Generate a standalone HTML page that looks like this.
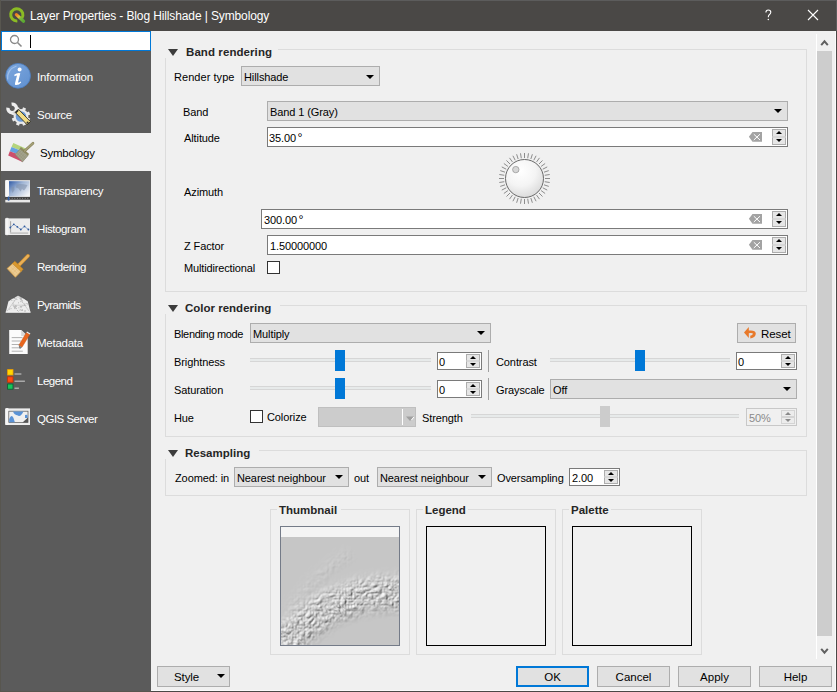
<!DOCTYPE html>
<html><head><meta charset="utf-8">
<style>
*{box-sizing:border-box}
html,body{margin:0;padding:0}
body{width:837px;height:692px;position:relative;overflow:hidden;background:#f0f0f0;font-family:"Liberation Sans",sans-serif;font-size:11px;color:#000}
div,span{position:absolute}
.t{white-space:nowrap;line-height:14px;font-size:11px;letter-spacing:-0.1px}
.b{font-weight:bold;font-size:11.5px;color:#262626;letter-spacing:0}
.combo{background:#e1e1e1;border:1px solid #adadad}
.arr{width:8px;height:4px;background:#000;clip-path:polygon(0 0,100% 0,50% 100%)}
.spin{background:#fff;border:1px solid #7a7a7a}
.grp{border:1px solid #dcdcdc}
.btn{background:#e1e1e1;border:1px solid #adadad;text-align:center;line-height:21px;font-size:11.5px}
.tri{width:0;height:0;border-left:5.5px solid transparent;border-right:5.5px solid transparent;border-top:7px solid #3c3c3c}
.side .t{color:#fff;font-size:11.5px;letter-spacing:-0.25px}
.sb{border:1px solid #adadad;background:#e8e8e8}
.groove{height:4px;background:#e7eaea;border-top:1px solid #d6d6d6;border-bottom:1px solid #d6d6d6}
.handle{width:10px;height:21px;background:#0078d7}
.sp2{width:14px;height:16px}
.sp2:before{content:"";position:absolute;left:0;top:0;width:14px;height:8px;box-sizing:border-box;border:1px solid #adadad;border-bottom-color:#d8d8d8;background:#e6e6e6}
.sp2:after{content:"";position:absolute;left:0;top:8px;width:14px;height:8px;box-sizing:border-box;border:1px solid #adadad;border-top-color:#d8d8d8;background:#e6e6e6}
.sp2 b,.sp3 b{position:absolute;left:4px;width:0;height:0;border-left:3px solid transparent;border-right:3px solid transparent;z-index:2}
.sp2 b.u{top:2px;border-bottom:3px solid #000}.sp2 b.d{top:10px;border-top:3px solid #000}
.sp3{width:14px;height:14px}
.sp3:before{content:"";position:absolute;left:0;top:0;width:14px;height:7px;box-sizing:border-box;border:1px solid #adadad;border-bottom-color:#d8d8d8;background:#e6e6e6}
.sp3:after{content:"";position:absolute;left:0;top:7px;width:14px;height:7px;box-sizing:border-box;border:1px solid #adadad;border-top-color:#d8d8d8;background:#e6e6e6}
.sp3 b.u{top:2px;border-bottom:3px solid #000}.sp3 b.d{top:9px;border-top:3px solid #000}
.dis{border-color:#d0d0d0}
.dis:before,.dis:after{border-color:#d4d4d4;background:#ececec}.dis b.u{border-bottom-color:#8a8a8a}.dis b.d{border-top-color:#8a8a8a}
</style></head><body>
<!-- window frame -->
<div style="left:0;top:0;width:837px;height:31px;background:#4a4846"></div>
<div style="left:835px;top:31px;width:1px;height:660px;background:#fafafa"></div><div style="left:0;top:690px;width:836px;height:1px;background:#fafafa"></div><div style="left:836px;top:0;width:1px;height:31px;background:#5c5c5c"></div><div style="left:836px;top:31px;width:1px;height:661px;background:#4a4846"></div>
<div style="left:151px;top:691px;width:686px;height:1px;background:#4a4846"></div><div style="left:0;top:0;width:837px;height:1px;background:#5c5c5c"></div>
<!-- title -->
<svg style="position:absolute;left:6px;top:4px" width="24" height="24" viewBox="0 0 24 24">
<defs><linearGradient id="pg" x1="0" y1="0" x2="1" y2="1"><stop offset="0" stop-color="#f0801e"/><stop offset="0.35" stop-color="#e0c040"/><stop offset="0.55" stop-color="#7cbc3a"/><stop offset="1" stop-color="#5aa832"/></linearGradient></defs>
<path d="M15.80 14.30 A6.1 6.1 0 1 0 11.33 16.88" fill="none" stroke="#8bbb24" stroke-width="3"/>
<path d="M10.4 10.6 L17.6 17.2" stroke="url(#pg)" stroke-width="3.2" stroke-linecap="round"/>
</svg>
<div class="t" style="left:30px;top:9px;font-size:12px;color:#fff;letter-spacing:-0.12px">Layer Properties - Blog Hillshade | Symbology</div>
<svg style="position:absolute;left:764px;top:9px" width="9" height="13" viewBox="0 0 9 13"><path d="M1.9 3.4 Q1.9 1 4.3 1 Q6.8 1 6.8 3.3 Q6.8 4.8 5.3 5.7 Q4.3 6.4 4.3 8.2" fill="none" stroke="#fff" stroke-width="1.1"/><circle cx="4.3" cy="10.6" r="0.75" fill="#fff"/></svg>
<svg style="position:absolute;left:807px;top:9px" width="12" height="12" viewBox="0 0 12 12"><path d="M1 1L11 11M11 1L1 11" stroke="#fff" stroke-width="1.1"/></svg>

<!-- sidebar -->
<div class="side" style="left:0;top:31px;width:151px;height:661px;background:#5b5b5b">
</div>
<div style="left:1px;top:31px;width:150px;height:20px;background:#fff;border:1px solid #0078d7"></div>
<svg style="position:absolute;left:9px;top:34px" width="14" height="14" viewBox="0 0 14 14"><circle cx="5.5" cy="5.5" r="4" fill="none" stroke="#8a8a8a" stroke-width="1.3"/><path d="M8.5 8.5L12.5 12.5" stroke="#8a8a8a" stroke-width="1.6"/></svg>
<div style="left:30px;top:35px;width:1px;height:13px;background:#000"></div>

<div style="left:1px;top:133px;width:151px;height:38px;background:#f0f0f0"></div>
<svg style="position:absolute;left:0;top:0" width="151" height="440" viewBox="0 0 151 440">
<defs>
<linearGradient id="ig" x1="0" y1="0" x2="1" y2="1"><stop offset="0" stop-color="#7ea8de"/><stop offset="1" stop-color="#5f90d0"/></linearGradient>
<linearGradient id="tg" x1="0" y1="0" x2="1" y2="0.8"><stop offset="0" stop-color="#2f5aa6"/><stop offset="0.45" stop-color="#9fb4d4"/><stop offset="1" stop-color="#f2f4f7"/></linearGradient>
</defs>
<!-- Information -->
<circle cx="18.1" cy="75.8" r="12.4" fill="url(#ig)" stroke="#4b7ec2" stroke-width="0.8"/><path d="M7.6 79.5 Q6.8 69.5 16.5 66" fill="none" stroke="#a8c6ee" stroke-width="1.3" opacity="0.8"/>
<circle cx="19.6" cy="69.4" r="2" fill="#fff"/>
<path d="M14.2 74.8 Q17 72.6 20.3 73.2 L18 82.4 Q19.4 82.6 20.8 81.4 L21.2 82.4 Q18.6 85.4 15.6 85 Q14.6 84.6 15 83.2 L17 75.6 Q15.6 75.8 14.6 76.2Z" fill="#fff"/>
<!-- Source -->
<circle cx="21" cy="116.5" r="7.4" fill="#e9e9e9"/><rect x="19.40" y="107.20" width="3.2" height="4" fill="#e9e9e9" transform="rotate(22.5 21 116.5)"/><rect x="19.40" y="107.20" width="3.2" height="4" fill="#e9e9e9" transform="rotate(67.5 21 116.5)"/><rect x="19.40" y="107.20" width="3.2" height="4" fill="#e9e9e9" transform="rotate(112.5 21 116.5)"/><rect x="19.40" y="107.20" width="3.2" height="4" fill="#e9e9e9" transform="rotate(157.5 21 116.5)"/><rect x="19.40" y="107.20" width="3.2" height="4" fill="#e9e9e9" transform="rotate(202.5 21 116.5)"/><rect x="19.40" y="107.20" width="3.2" height="4" fill="#e9e9e9" transform="rotate(247.5 21 116.5)"/><rect x="19.40" y="107.20" width="3.2" height="4" fill="#e9e9e9" transform="rotate(292.5 21 116.5)"/><rect x="19.40" y="107.20" width="3.2" height="4" fill="#e9e9e9" transform="rotate(337.5 21 116.5)"/>
<circle cx="21" cy="116.5" r="5.3" fill="#6c9bd6"/>
<path d="M11.60 104.14 A4.3 4.3 0 1 1 7.94 107.80" fill="none" stroke="#eeeeee" stroke-width="3.4"/>
<path d="M13.5 111.5 L16.5 114" stroke="#dadada" stroke-width="3.4"/>
<path d="M15.2 112.4 L18.4 109.2 L30.4 121.6 L27.2 124.8Z" fill="#f2dc84" stroke="#2e2e24" stroke-width="0.9"/>
<path d="M15.6 112.8 L18.2 110.2" stroke="#222" stroke-width="1.6"/>
<circle cx="27.6" cy="122.6" r="1.1" fill="#333"/>
<!-- Symbology (selected) -->
<path d="M13.3 142.9 L25.8 148.5 L24.2 152 L11.5 147Z" fill="#b4d47c"/>
<path d="M11.5 147 L24.2 152 L22.6 156 L9.8 151.2Z" fill="#62a2e2"/>
<path d="M9.8 151.2 L22.6 156 L22.5 161.9 L8.2 155.4Z" fill="#cd4f6c"/>
<path d="M15.1 154.5 L20.2 149 L28.1 155.4 L22.5 161.9Z" fill="#a3a38c" stroke="#807e64" stroke-width="0.6"/>
<path d="M16.6 156 L21.6 150.4 M18.2 157.4 L23.4 151.8 M19.8 158.8 L25 153.2 M21.4 160.2 L26.6 154.6 M17 153 L24 159.6 M18.6 151.4 L25.6 158" stroke="#8a8a70" stroke-width="0.45" opacity="0.8"/>
<path d="M19.6 148.4 L21 147 L29.2 154 L27.8 155.6Z" fill="#8e8a62"/>
<path d="M24.6 151 L33 143.2" stroke="#847e58" stroke-width="2.6" stroke-linecap="round"/><path d="M24.6 151 L33 143.2" stroke="#a6a278" stroke-width="1.6" stroke-linecap="round"/>
<!-- Transparency -->
<rect x="5.3" y="180.2" width="24.7" height="16.6" fill="#f0f0f0"/>
<rect x="5.3" y="180" width="3.6" height="17" rx="1.5" fill="#f8f8f8"/>
<rect x="9" y="181.2" width="20.6" height="15.2" fill="url(#tg)"/>
<path d="M16.5 184.5 L20 184 L23.5 184.3 L27.5 185 L26 188 L24 190.5 L22 189 L20.5 191.5 L18.5 188.5 L16 187.5Z M11.5 187 L14 186.5 L14.5 190 L12.5 193 L11.5 190Z" fill="#7d8ea8" opacity="0.55"/>
<rect x="5.3" y="197.3" width="24.7" height="2.2" fill="#3c3c3c"/>
<path d="M6.5 198.4 H29.5" stroke="#8a8a8a" stroke-width="1" stroke-dasharray="1 1.6"/>
<rect x="5.3" y="199.8" width="24.7" height="2.6" fill="#e8e8e8"/>
<rect x="7.8" y="196.6" width="1.6" height="4" fill="#2a5aa8"/>
<!-- Histogram -->
<rect x="5.3" y="218.4" width="24.7" height="16.6" fill="#ececec"/>
<rect x="5.3" y="218" width="3.6" height="17" rx="1.5" fill="#f6f6f6" stroke="#dcdcdc" stroke-width="0.4"/>
<rect x="10.2" y="221.2" width="0.9" height="11.4" fill="#9a9a9a"/>
<rect x="10.2" y="232.4" width="18" height="1.4" fill="#bdbdbd"/>
<path d="M10.3 227.5 L13.8 224.3 L17.3 226.8 L20.8 229.5 L24.5 226.4 L28.4 229.5" fill="none" stroke="#5c7fb8" stroke-width="0.7"/>
<g fill="#2f5a9e"><circle cx="10.3" cy="227.5" r="0.9"/><circle cx="13.8" cy="224.3" r="0.9"/><circle cx="17.3" cy="226.8" r="0.9"/><circle cx="20.8" cy="229.5" r="0.9"/><circle cx="24.5" cy="226.4" r="0.9"/><circle cx="28.4" cy="229.5" r="0.9"/></g>
<!-- Rendering -->
<path d="M18.6 265.4 L28 255.8" stroke="#c98a2e" stroke-width="3.6" stroke-linecap="round"/>
<path d="M18.6 265.4 L28 255.8" stroke="#e9b058" stroke-width="2.4" stroke-linecap="round"/>
<path d="M7.1 268.5 L13.1 263.2 L21.6 270.8 L15.4 277.3Z" fill="#eccb92" stroke="#d39a40" stroke-width="0.8"/>
<path d="M8.8 268.6 L15.4 275.2 M10.6 267 L17.4 273.4 M12.4 265.4 L19.4 271.8 M11 270.6 L16.6 265.4 M13.2 272.6 L18.8 267.2" stroke="#dcae66" stroke-width="0.5" opacity="0.7"/>
<path d="M12.4 263.6 L14.8 261.2 L23.2 269.2 L21 271.4Z" fill="#d9982f" stroke="#c0821f" stroke-width="0.6"/>
<!-- Pyramids -->
<path d="M5.7 312.5 L8.5 301 L12 298.6 L14 297.8 L18 295.2 L22 297.6 L24 298.4 L27.7 301 L30.5 312.5Z" fill="#ececec"/>
<path d="M8.5 301 L12 298.6 L14 297.8 L18 295.2 L22 297.6 L24 298.4 L27.7 301" fill="none" stroke="#303030" stroke-width="0.9" opacity="0.55"/>
<path d="M6.8 311.5 L18 296.2 L29.4 311.5 M12.2 305.2 L23.8 305.2" fill="none" stroke="#b8b8b8" stroke-width="0.6"/>
<rect x="13.3" y="304.6" width="0.9" height="0.9" fill="#b0b0b0"/><rect x="15.7" y="305.5" width="0.9" height="0.9" fill="#b0b0b0"/><rect x="20.3" y="297.9" width="0.9" height="0.9" fill="#b0b0b0"/><rect x="9.2" y="308.7" width="0.9" height="0.9" fill="#b0b0b0"/><rect x="13.7" y="300.3" width="0.9" height="0.9" fill="#b0b0b0"/><rect x="26.9" y="303.6" width="0.9" height="0.9" fill="#b0b0b0"/><rect x="24.1" y="303.7" width="0.9" height="0.9" fill="#b0b0b0"/><rect x="20.5" y="299.1" width="0.9" height="0.9" fill="#b0b0b0"/><rect x="20.4" y="309.2" width="0.9" height="0.9" fill="#b0b0b0"/><rect x="18.4" y="307.4" width="0.9" height="0.9" fill="#b0b0b0"/><rect x="21.1" y="297.9" width="0.9" height="0.9" fill="#b0b0b0"/><rect x="22.6" y="305.3" width="0.9" height="0.9" fill="#b0b0b0"/><rect x="24.6" y="303.6" width="0.9" height="0.9" fill="#b0b0b0"/><rect x="21.9" y="309.3" width="0.9" height="0.9" fill="#b0b0b0"/><rect x="21.9" y="309.9" width="0.9" height="0.9" fill="#b0b0b0"/><rect x="16.1" y="308.2" width="0.9" height="0.9" fill="#b0b0b0"/><rect x="17.0" y="310.1" width="0.9" height="0.9" fill="#b0b0b0"/><rect x="11.4" y="300.0" width="0.9" height="0.9" fill="#b0b0b0"/><rect x="26.4" y="303.1" width="0.9" height="0.9" fill="#b0b0b0"/><rect x="20.3" y="301.2" width="0.9" height="0.9" fill="#b0b0b0"/><rect x="18.1" y="302.4" width="0.9" height="0.9" fill="#b0b0b0"/><rect x="15.3" y="305.2" width="0.9" height="0.9" fill="#b0b0b0"/><rect x="19.5" y="309.7" width="0.9" height="0.9" fill="#b0b0b0"/><rect x="21.3" y="310.0" width="0.9" height="0.9" fill="#b0b0b0"/><rect x="24.4" y="310.9" width="0.9" height="0.9" fill="#b0b0b0"/><rect x="21.1" y="299.3" width="0.9" height="0.9" fill="#b0b0b0"/><rect x="24.5" y="310.5" width="0.9" height="0.9" fill="#b0b0b0"/><rect x="25.3" y="305.0" width="0.9" height="0.9" fill="#b0b0b0"/><rect x="21.8" y="300.0" width="0.9" height="0.9" fill="#b0b0b0"/><rect x="24.0" y="305.0" width="0.9" height="0.9" fill="#b0b0b0"/><rect x="14.1" y="297.9" width="0.9" height="0.9" fill="#b0b0b0"/><rect x="24.4" y="310.9" width="0.9" height="0.9" fill="#b0b0b0"/><rect x="10.6" y="308.2" width="0.9" height="0.9" fill="#b0b0b0"/><rect x="16.4" y="299.1" width="0.9" height="0.9" fill="#b0b0b0"/><rect x="14.3" y="307.8" width="0.9" height="0.9" fill="#b0b0b0"/><rect x="20.1" y="297.6" width="0.9" height="0.9" fill="#b0b0b0"/><rect x="21.9" y="301.6" width="0.9" height="0.9" fill="#b0b0b0"/><rect x="24.9" y="310.7" width="0.9" height="0.9" fill="#b0b0b0"/><rect x="18.1" y="311.0" width="0.9" height="0.9" fill="#b0b0b0"/><rect x="14.6" y="298.1" width="0.9" height="0.9" fill="#b0b0b0"/><rect x="19.8" y="297.4" width="0.9" height="0.9" fill="#b0b0b0"/><rect x="12.6" y="302.7" width="0.9" height="0.9" fill="#b0b0b0"/>
<path d="M13 306 L15 309.5 L17 306Z M19.5 306 L21 308.5 L22.5 306Z" fill="#bdbdbd"/>
<rect x="5.7" y="311.6" width="24.8" height="1" fill="#f6f6f6"/>
<!-- Metadata -->
<path d="M9.2 330 L21.2 330 L27.7 336 L27.7 354 L9.2 354Z" fill="#fbfbfb"/>
<path d="M21.2 330 L21.2 336 L27.7 336Z" fill="#d8d8d8"/>
<path d="M11.7 337.6H22.5M11.7 341H21M11.7 344.5H20.2M11.7 347.8H21M11.7 351.2H22.8" stroke="#a8a8a8" stroke-width="0.9"/>
<path d="M26.4 332.6 L29.8 334.6 L22 347.2 L18.8 345.2Z" fill="#e8661e" stroke="#c04c10" stroke-width="0.4"/>
<path d="M18.8 345.2 L22 347.2 L20.2 348.8 L19.2 348.2Z" fill="#7a7a7a"/>
<path d="M26.4 332.6 L29.8 334.6 L30.4 333.4 L27 331.4Z" fill="#f0f0f0"/>
<!-- Legend -->
<rect x="7.6" y="369.6" width="5.4" height="5.4" fill="#ffd600" stroke="#f0a000" stroke-width="0.8"/>
<rect x="7.6" y="376.8" width="5.4" height="5.4" fill="#ff4a10" stroke="#c83000" stroke-width="0.8"/>
<rect x="7.6" y="384" width="5.4" height="5.2" fill="#16c45a" stroke="#0a5a30" stroke-width="0.8"/>
<path d="M14.5 374H21.4M14.5 381.2H24.9M14.5 388.2H18.9" stroke="#a9a9a9" stroke-width="1.6"/>
<!-- QGIS Server -->
<rect x="5.3" y="408.4" width="24.7" height="16.6" fill="#ececec"/>
<rect x="5.3" y="408" width="3.6" height="17" rx="1.5" fill="#f6f6f6"/>
<rect x="8.8" y="411.2" width="19.2" height="11.4" fill="#f0f0f0" stroke="#555" stroke-width="0.7"/>
<path d="M13 411.5 Q14 415 18 415.5 Q20 417 22 414 L23.5 411.5Z" fill="#5b93d6"/>
<path d="M9.2 422.3 L9.2 419 Q11.5 413.5 13.5 418 L14.8 422.3Z" fill="#5b93d6"/>
<path d="M25 415 Q27.5 414 27.6 416 L27.6 418 L25 418Z" fill="#5b93d6"/>
<path d="M22.5 422.6 L28 417.6 L28 422.6Z" fill="#555"/>
</svg>


<div class="side">
<div class="t" style="left:37px;top:70px;letter-spacing:-0.13px">Information</div>
<div class="t" style="left:37px;top:108px">Source</div>
<div class="t" style="left:40px;top:146px;color:#000">Symbology</div>
<div class="t" style="left:37px;top:184px;letter-spacing:-0.3px">Transparency</div>
<div class="t" style="left:37px;top:222px;letter-spacing:-0.42px">Histogram</div>
<div class="t" style="left:37px;top:260px;letter-spacing:-0.45px">Rendering</div>
<div class="t" style="left:37px;top:298px;letter-spacing:-0.55px">Pyramids</div>
<div class="t" style="left:37px;top:336px">Metadata</div>
<div class="t" style="left:37px;top:374px;letter-spacing:-0.5px">Legend</div>
<div class="t" style="left:37px;top:412px;letter-spacing:-0.5px">QGIS Server</div>
</div>

<div style="left:0;top:0;width:1px;height:692px;background:#58564f"></div><div style="left:0;top:691px;width:151px;height:1px;background:#58564f"></div>
<!-- scrollbar -->
<div style="left:816px;top:34px;width:1px;height:625px;background:#fff"></div>
<div style="left:817px;top:51px;width:15px;height:585px;background:#cdcdcd"></div>
<svg style="position:absolute;left:820px;top:39px" width="10" height="8" viewBox="0 0 10 8"><path d="M1.2 6.2L4.5 2.4L7.8 6.2" fill="none" stroke="#606060" stroke-width="2"/></svg>
<svg style="position:absolute;left:820px;top:647px" width="10" height="8" viewBox="0 0 10 8"><path d="M1.2 1.8L4.5 5.6L7.8 1.8" fill="none" stroke="#606060" stroke-width="2"/></svg>

<!-- ===== Band rendering ===== -->
<div class="grp" style="left:165px;top:49px;width:642px;height:243px"></div>
<div style="left:164px;top:42px;width:114px;height:16px;background:#f0f0f0"></div>
<div class="tri" style="left:168px;top:49px"></div>
<div class="t b" style="left:186px;top:45px;letter-spacing:0.08px">Band rendering</div>
<div class="t" style="left:174px;top:70px;letter-spacing:0.05px">Render type</div>
<div class="combo" style="left:241px;top:66px;width:139px;height:20px"><div class="arr" style="right:5px;top:8px"></div></div>
<div class="t" style="left:244px;top:70px">Hillshade</div>

<div class="t" style="left:183px;top:105px">Band</div>
<div class="combo" style="left:267px;top:101px;width:521px;height:20px"><div class="arr" style="right:5px;top:7px"></div></div>
<div class="t" style="left:270px;top:105px">Band 1 (Gray)</div>

<div class="t" style="left:184px;top:131px">Altitude</div>
<div class="spin" style="left:267px;top:127px;width:521px;height:20px"></div>
<div class="t" style="left:269px;top:131px">35.00<span style="position:relative;top:1px;margin-left:1.5px;font-size:12.5px;vertical-align:top;line-height:13px">°</span></div>

<div class="t" style="left:184px;top:185px">Azimuth</div>
<div class="spin" style="left:261px;top:209px;width:527px;height:20px"></div>
<div class="t" style="left:264px;top:213px">300.00<span style="position:relative;top:1px;margin-left:1.5px;font-size:12.5px;vertical-align:top;line-height:13px">°</span></div>

<div class="t" style="left:184px;top:239px">Z Factor</div>
<div class="spin" style="left:267px;top:235px;width:521px;height:20px"></div>
<div class="t" style="left:270px;top:239px">1.50000000</div>

<div class="t" style="left:184px;top:261px;letter-spacing:-0.15px">Multidirectional</div>
<div style="left:267px;top:261px;width:13px;height:13px;background:#fff;border:1px solid #333"></div>

<!-- ===== Color rendering ===== -->
<div class="grp" style="left:165px;top:305px;width:642px;height:132px"></div>
<div style="left:164px;top:298px;width:116px;height:16px;background:#f0f0f0"></div>
<div class="tri" style="left:168px;top:305px"></div>
<div class="t b" style="left:185px;top:301px">Color rendering</div>
<div class="t" style="left:174px;top:327px;letter-spacing:-0.33px">Blending mode</div>
<div class="combo" style="left:250px;top:323px;width:241px;height:20px"><div class="arr" style="right:5px;top:7px"></div></div>
<div class="t" style="left:253px;top:327px">Multiply</div>
<div class="btn" style="left:737px;top:323px;width:59px;height:20px"></div>
<div class="t" style="left:761px;top:327px;font-size:11.5px">Reset</div>
<svg style="position:absolute;left:738px;top:322px" width="24" height="22" viewBox="0 0 24 22"><path d="M6 10.6 L10.8 5 L10.8 16Z" fill="#e8792a"/><path d="M10 8.6 Q17.6 7.6 17.8 11.6 Q17.8 15.6 12.4 16.6 L12.2 13.8 Q14.8 13.2 14.9 11.8 Q15 10.6 10 11.2Z" fill="#e8792a"/></svg>

<div class="t" style="left:174px;top:355px">Brightness</div>
<div class="t" style="left:174px;top:383px">Saturation</div>
<div class="t" style="left:174px;top:411px">Hue</div>
<div class="t" style="left:496px;top:355px">Contrast</div>
<div class="t" style="left:496px;top:383px">Grayscale</div>
<div class="combo" style="left:550px;top:379px;width:247px;height:20px"><div class="arr" style="right:5px;top:7px"></div></div>
<div class="t" style="left:553px;top:383px">Off</div>

<div style="left:250px;top:410px;width:13px;height:13px;background:#fff;border:1px solid #333"></div>
<div class="t" style="left:267px;top:410px">Colorize</div>
<div style="left:318px;top:407px;width:98px;height:20px;background:#cccccc;border:1px solid #bfbfbf"></div>
<div style="left:402px;top:409px;width:1px;height:16px;background:#fff"></div>
<svg style="position:absolute;left:405px;top:415px" width="10" height="7" viewBox="0 0 10 7"><path d="M1 1.5H9L5 6Z" fill="#a0a0a0"/><path d="M6.5 5L8.8 2" stroke="#fff" stroke-width="1"/></svg>
<div class="t" style="left:422px;top:411px">Strength</div>


<!-- spin buttons & clear icons for band spinboxes -->
<div style="left:772px;top:129px;width:14px;height:16px" class="sp2"><b class="u"></b><b class="d"></b></div>
<div style="left:772px;top:211px;width:14px;height:16px" class="sp2"><b class="u"></b><b class="d"></b></div>
<div style="left:772px;top:237px;width:14px;height:16px" class="sp2"><b class="u"></b><b class="d"></b></div>
<svg style="position:absolute;left:748px;top:132px" width="15" height="11" viewBox="0 0 15 11"><path d="M0.9 4.85L4.5 0H14V9.7H4.5Z" fill="#a3a3a3"/><path d="M5.8 2.2L12 8M12 2.2L5.8 8" stroke="#fff" stroke-width="1"/></svg>
<svg style="position:absolute;left:748px;top:214px" width="15" height="11" viewBox="0 0 15 11"><path d="M0.9 4.85L4.5 0H14V9.7H4.5Z" fill="#a3a3a3"/><path d="M5.8 2.2L12 8M12 2.2L5.8 8" stroke="#fff" stroke-width="1"/></svg>
<svg style="position:absolute;left:748px;top:240px" width="15" height="11" viewBox="0 0 15 11"><path d="M0.9 4.85L4.5 0H14V9.7H4.5Z" fill="#a3a3a3"/><path d="M5.8 2.2L12 8M12 2.2L5.8 8" stroke="#fff" stroke-width="1"/></svg>
<!-- dial -->
<svg style="position:absolute;left:497px;top:151px" width="55" height="55" viewBox="0 0 55 55" id="dial"><defs><radialGradient id="dg" cx="0.4" cy="0.3" r="0.8"><stop offset="0" stop-color="#ffffff"/><stop offset="0.5" stop-color="#f4f4f4"/><stop offset="0.85" stop-color="#dedede"/><stop offset="1" stop-color="#d2d2d2"/></radialGradient></defs><path d="M27.50 7.00L27.50 2.00M30.71 7.25L31.49 2.31M33.83 8.00L35.38 3.25M36.81 9.23L39.08 4.78M39.55 10.92L42.49 6.87M42.00 13.00L45.53 9.47M44.08 15.45L48.13 12.51M45.77 18.19L50.22 15.92M47.00 21.17L51.75 19.62M47.75 24.29L52.69 23.51M48.00 27.50L53.00 27.50M47.75 30.71L52.69 31.49M47.00 33.83L51.75 35.38M45.77 36.81L50.22 39.08M44.08 39.55L48.13 42.49M42.00 42.00L45.53 45.53M39.55 44.08L42.49 48.13M36.81 45.77L39.08 50.22M33.83 47.00L35.38 51.75M30.71 47.75L31.49 52.69M27.50 48.00L27.50 53.00M24.29 47.75L23.51 52.69M21.17 47.00L19.62 51.75M18.19 45.77L15.92 50.22M15.45 44.08L12.51 48.13M13.00 42.00L9.47 45.53M10.92 39.55L6.87 42.49M9.23 36.81L4.78 39.08M8.00 33.83L3.25 35.38M7.25 30.71L2.31 31.49M7.00 27.50L2.00 27.50M7.25 24.29L2.31 23.51M8.00 21.17L3.25 19.62M9.23 18.19L4.78 15.92M10.92 15.45L6.87 12.51M13.00 13.00L9.47 9.47M15.45 10.92L12.51 6.87M18.19 9.23L15.92 4.78M21.17 8.00L19.62 3.25M24.29 7.25L23.51 2.31" stroke="#8c8c8c" stroke-width="1"/><circle cx="27.5" cy="27.5" r="19" fill="url(#dg)" stroke="#6a6a6a" stroke-width="1"/><circle cx="18.8" cy="18.6" r="3.2" fill="#d6d6d6" stroke="#9a9a9a" stroke-width="0.8"/></svg>
<!-- sliders -->
<div class="groove" style="left:250px;top:358px;width:181px"></div>
<div class="handle" style="left:335px;top:350px"></div>
<div class="groove" style="left:250px;top:386px;width:181px"></div>
<div class="handle" style="left:335px;top:378px"></div>
<div class="groove" style="left:550px;top:358px;width:180px"></div>
<div class="handle" style="left:635px;top:350px"></div>
<div class="groove" style="left:471px;top:414px;width:268px"></div>
<div class="handle" style="left:600px;top:406px;background:#cccccc"></div>
<!-- small spinboxes -->
<div class="spin" style="left:437px;top:352px;width:45px;height:18px"></div>
<div class="sp3" style="left:466px;top:354px"><b class="u"></b><b class="d"></b></div>
<div class="t" style="left:439px;top:355px">0</div>
<div class="spin" style="left:437px;top:380px;width:45px;height:18px"></div>
<div class="sp3" style="left:466px;top:382px"><b class="u"></b><b class="d"></b></div>
<div class="t" style="left:439px;top:383px">0</div>
<div class="spin" style="left:736px;top:352px;width:61px;height:18px"></div>
<div class="sp3" style="left:781px;top:354px"><b class="u"></b><b class="d"></b></div>
<div class="t" style="left:738px;top:355px">0</div>
<div class="spin" style="left:746px;top:408px;width:51px;height:18px;border-color:#c8c8c8;background:#f0f0f0"></div>
<div class="sp3 dis" style="left:781px;top:410px"><b class="u"></b><b class="d"></b></div>
<div class="t" style="left:749px;top:411px;color:#8a8a8a">50%</div>
<div style="left:488px;top:350px;width:1px;height:22px;background:#a0a0a0"></div>
<div style="left:488px;top:378px;width:1px;height:22px;background:#a0a0a0"></div>

<!-- ===== Resampling ===== -->
<div class="grp" style="left:165px;top:450px;width:642px;height:46px"></div>
<div style="left:164px;top:443px;width:95px;height:16px;background:#f0f0f0"></div>
<div class="tri" style="left:168px;top:450px"></div>
<div class="t b" style="left:185px;top:446px">Resampling</div>
<div class="t" style="left:175px;top:471px">Zoomed: in</div>
<div class="combo" style="left:234px;top:467px;width:115px;height:20px"><div class="arr" style="right:5px;top:7px"></div></div>
<div class="t" style="left:237px;top:471px">Nearest neighbour</div>
<div class="t" style="left:354px;top:471px">out</div>
<div class="combo" style="left:377px;top:467px;width:115px;height:20px"><div class="arr" style="right:5px;top:7px"></div></div>
<div class="t" style="left:380px;top:471px">Nearest neighbour</div>
<div class="t" style="left:497px;top:471px">Oversampling</div>
<div class="spin" style="left:569px;top:468px;width:51px;height:18px"></div>
<div class="t" style="left:572px;top:471px">2.00</div>
<div class="sp3" style="left:604px;top:470px"><b class="u"></b><b class="d"></b></div>

<!-- ===== Thumbnail / Legend / Palette ===== -->
<div class="grp" style="left:270px;top:509px;width:140px;height:146px"></div>
<div style="left:277px;top:502px;width:64px;height:14px;background:#f0f0f0"></div>
<div class="t b" style="left:279px;top:503px">Thumbnail</div>
<div style="left:280px;top:526px;width:120px;height:120px;background:#c6c6c6;border:1px solid #747b88"><div style="left:0;top:0;width:118px;height:10px;background:#f4f4f4"></div></div>

<svg style="position:absolute;left:281px;top:537px" width="118" height="108" viewBox="281 537 118 108">
<defs><filter id="hs" filterUnits="userSpaceOnUse" x="281" y="537" width="118" height="108" color-interpolation-filters="sRGB">
<feGaussianBlur in="SourceAlpha" stdDeviation="5" result="m"/>
<feTurbulence type="turbulence" baseFrequency="0.17" numOctaves="4" seed="8" result="n"/>
<feComposite in="n" in2="m" operator="arithmetic" k1="1.2" k2="0" k3="0" k4="0" result="h"/>
<feDiffuseLighting in="h" surfaceScale="1.0" diffuseConstant="1.0" lighting-color="#ffffff" result="l"><feDistantLight azimuth="225" elevation="51"/></feDiffuseLighting>
</filter></defs>
<g filter="url(#hs)"><path d="M278 652 Q300 625 330 608 Q365 590 410 594" fill="none" stroke="#000" stroke-width="30"/><path d="M290 610 Q320 570 350 555" fill="none" stroke="rgba(0,0,0,0.3)" stroke-width="5"/></g>
</svg>
<div class="grp" style="left:416px;top:509px;width:140px;height:146px"></div>
<div style="left:423px;top:502px;width:45px;height:14px;background:#f0f0f0"></div>
<div class="t b" style="left:425px;top:503px">Legend</div>
<div style="left:426px;top:526px;width:120px;height:120px;border:1px solid #000"></div>

<div class="grp" style="left:562px;top:509px;width:140px;height:146px"></div>
<div style="left:569px;top:502px;width:42px;height:14px;background:#f0f0f0"></div>
<div class="t b" style="left:571px;top:503px">Palette</div>
<div style="left:572px;top:526px;width:120px;height:120px;border:1px solid #000"></div>

<!-- ===== bottom buttons ===== -->
<div class="btn" style="left:157px;top:666px;width:73px;height:21px"></div>
<div class="t" style="left:174px;top:670px;font-size:11.5px">Style</div>
<div class="arr" style="left:217px;top:674px"></div>
<div class="btn" style="left:516px;top:666px;width:73px;height:21px;border:2px solid #0078d7;line-height:19px">OK</div>
<div class="btn" style="left:597px;top:666px;width:73px;height:21px">Cancel</div>
<div class="btn" style="left:678px;top:666px;width:73px;height:21px">Apply</div>
<div class="btn" style="left:759px;top:666px;width:73px;height:21px">Help</div>
</body></html>
